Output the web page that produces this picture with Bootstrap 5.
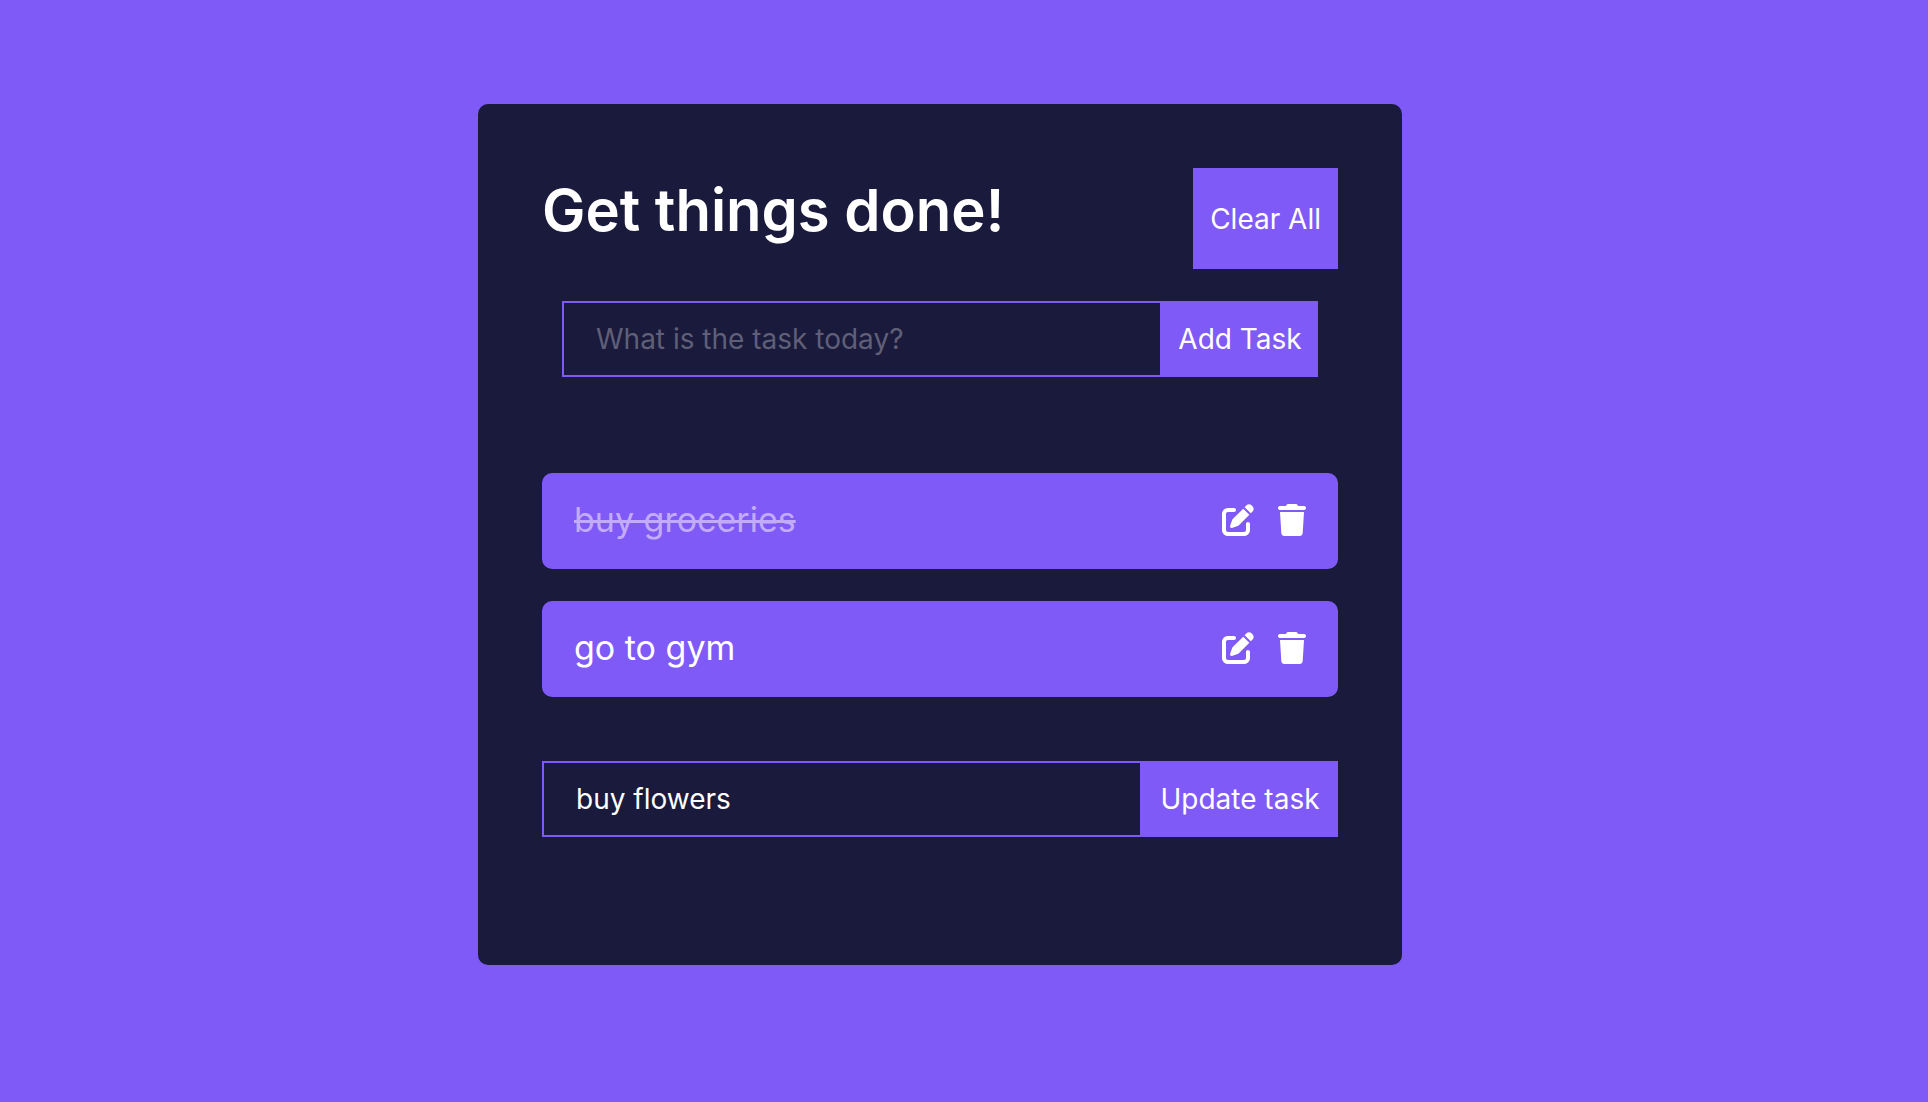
<!DOCTYPE html>
<html lang="en">
<head>
<meta charset="utf-8">
<meta name="viewport" content="width=device-width, initial-scale=1">
<title>Get things done!</title>
<link rel="stylesheet" href="https://cdn.jsdelivr.net/npm/bootstrap@5.3.0/dist/css/bootstrap.min.css">
<style>
  :root { --violet: #805af7; --night: #1a1a3c; }
  body { padding-top: 104px; background: var(--violet); font-family: Inter, "Noto Sans", sans-serif; color: #fff; }
  .todo-panel { max-width: 924px; padding: 64px 64px 128px; background: var(--night); border-radius: 10px; }
  .todo-head { margin-bottom: 32px; }
  .todo-title { font-size: 58px; line-height: 84px; font-weight: 600; }
  .todo-btn { --bs-btn-color: #fff; --bs-btn-bg: var(--violet); --bs-btn-border-color: var(--violet); --bs-btn-hover-color: #fff; --bs-btn-hover-bg: #6f48ea; --bs-btn-font-size: 28px; --bs-btn-border-radius: 0; --bs-btn-padding-x: 15px; --bs-btn-line-height: 40px; }
  .todo-clear { padding: 30px 16px 29px; }
  .todo-field.form-control { width: 600px; padding: 16px 32px; font-size: 28px; line-height: 40px; color: #fff; background: transparent; border: 2px solid var(--violet); border-radius: 0; }
  .todo-field::placeholder { color: #5f5f77; opacity: 1; }
  .todo-add { margin: 0 20px 96px; }
  .todo-list { gap: 32px; margin-bottom: 64px; }
  .todo-item { padding: 23px 32px 25px; background: var(--violet); border-radius: 10px; font-size: 34px; line-height: 48px; }
  .todo-done { color: #c2acf9; text-decoration: line-through; text-decoration-thickness: 3px; }
  .todo-icons { gap: 24px; }
  .todo-icons svg { display: block; height: 32px; fill: currentColor; }
</style>
</head>
<body class="min-vh-100 px-3 pe-lg-5 ps-lg-0">
<svg class="d-none" aria-hidden="true">
  <symbol id="edit" viewBox="0 0 512 512"><path d="M471.6 21.7c-21.9-21.9-57.3-21.9-79.2 0L362.3 51.7l97.9 97.9 30.1-30.1c21.9-21.9 21.9-57.3 0-79.2L471.6 21.7zm-299.2 220c-6.1 6.1-10.8 13.6-13.5 21.9l-29.6 88.8c-2.9 8.6-.6 18.1 5.8 24.6s15.9 8.7 24.6 5.8l88.8-29.6c8.2-2.7 15.7-7.4 21.9-13.5L437.7 172.3 339.7 74.3 172.4 241.7zM96 64C43 64 0 107 0 160V416c0 53 43 96 96 96H352c53 0 96-43 96-96V320c0-17.7-14.3-32-32-32s-32 14.3-32 32v96c0 17.7-14.3 32-32 32H96c-17.7 0-32-14.3-32-32V160c0-17.7 14.3-32 32-32h96c17.7 0 32-14.3 32-32s-14.3-32-32-32H96z"/></symbol>
  <symbol id="trash" viewBox="0 0 448 512"><path d="M135.2 17.7L128 32H32C14.3 32 0 46.3 0 64S14.3 96 32 96H416c17.7 0 32-14.3 32-32s-14.3-32-32-32H320l-7.2-14.3C307.4 6.8 296.3 0 284.2 0H163.8c-12.1 0-23.2 6.8-28.6 17.7zM416 128H32L53.2 467c1.6 25.3 22.6 45 47.9 45H346.9c25.3 0 46.3-19.7 47.9-45L416 128z"/></symbol>
</svg>
<main class="todo-panel mx-auto">
  <header class="todo-head d-flex justify-content-between align-items-start">
    <h1 class="todo-title mb-0">Get things done!</h1>
    <button type="button" class="btn todo-btn todo-clear text-nowrap">Clear All</button>
  </header>
  <form class="todo-add d-flex">
    <input id="new-task" type="text" aria-label="New task" class="form-control todo-field flex-shrink-1" placeholder="What is the task today?">
    <button type="submit" class="btn todo-btn text-nowrap flex-grow-1">Add Task</button>
  </form>
  <ul class="todo-list list-unstyled d-flex flex-column">
    <li class="todo-item d-flex justify-content-between align-items-center">
      <span class="todo-done">buy groceries</span>
      <span class="todo-icons d-flex">
        <button type="button" class="btn p-0 border-0 text-white" aria-label="Edit buy groceries"><svg width="32"><use href="#edit"/></svg></button>
        <button type="button" class="btn p-0 border-0 text-white" aria-label="Delete buy groceries"><svg width="28"><use href="#trash"/></svg></button>
      </span>
    </li>
    <li class="todo-item d-flex justify-content-between align-items-center">
      <span>go to gym</span>
      <span class="todo-icons d-flex">
        <button type="button" class="btn p-0 border-0 text-white" aria-label="Edit go to gym"><svg width="32"><use href="#edit"/></svg></button>
        <button type="button" class="btn p-0 border-0 text-white" aria-label="Delete go to gym"><svg width="28"><use href="#trash"/></svg></button>
      </span>
    </li>
  </ul>
  <form class="d-flex">
    <input id="edit-task" type="text" aria-label="Update task" class="form-control todo-field flex-shrink-1" value="buy flowers">
    <button type="submit" class="btn todo-btn text-nowrap flex-grow-1">Update task</button>
  </form>
</main>
<script src="https://cdn.jsdelivr.net/npm/bootstrap@5.3.0/dist/js/bootstrap.bundle.min.js"></script>
</body>
</html>
